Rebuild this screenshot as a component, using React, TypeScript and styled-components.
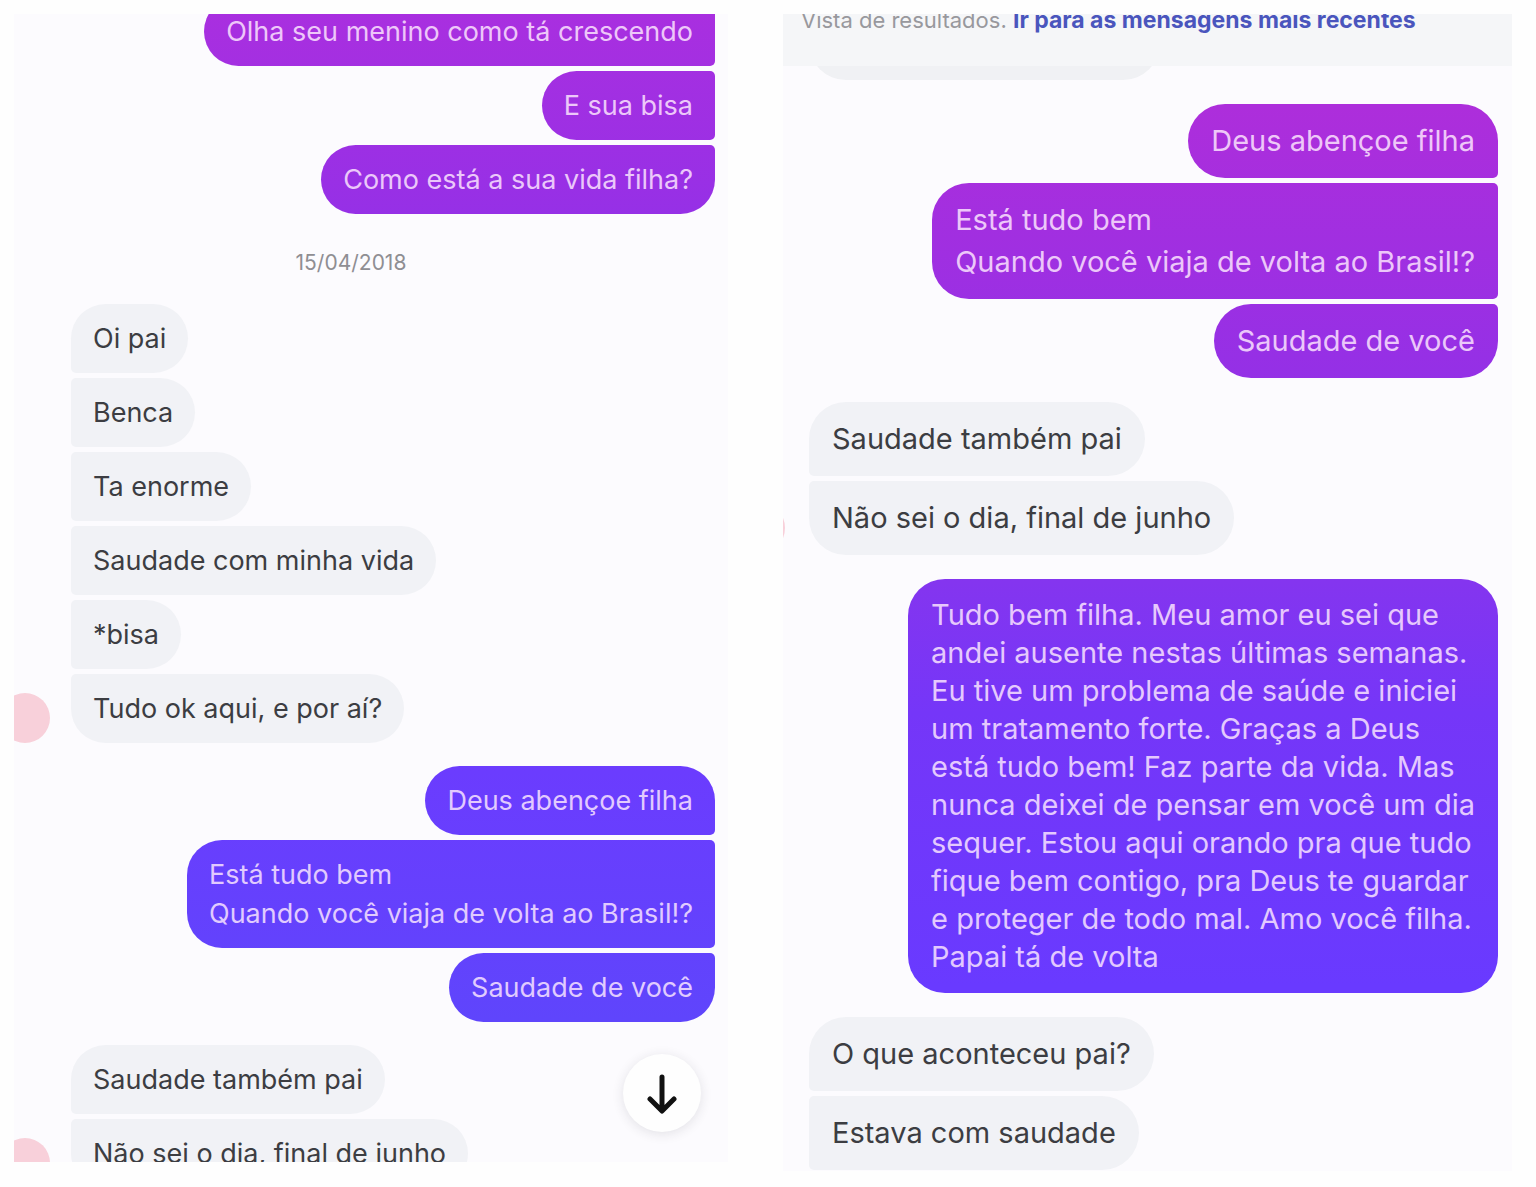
import React from "react";
import styled, { createGlobalStyle, css } from "styled-components";

const GlobalStyle = createGlobalStyle`
  *, *::before, *::after { box-sizing: border-box; }
  body {
    margin: 0;
    background: #fefefe;
    font-family: Inter, "Liberation Sans", sans-serif;
  }
`;

type Scale = "regular" | "large";

const scales = {
  regular: { font: 27, line: 39, padY: 15, padX: 22, radius: 35, edge: 13, avatar: 50, avatarShift: -14, avatarGap: 21, groupGap: 23 },
  large: { font: 29, line: 42, padY: 16, padX: 23, radius: 37, edge: 14, avatar: 54, avatarShift: -52, avatarGap: 24, groupGap: 24 },
};

const gradients = {
  regular: "linear-gradient(#aa2fdf 0%, #9630e6 18%, #6b3cfe 65%, #5f45fc 86%)",
  large: "linear-gradient(#ad2edb 9%, #9430e6 32%, #8435ef 49%, #7536f8 60%, #693aff 83%)",
};

const Page = styled.main`
  display: grid;
  grid-template-columns: 714fr 729fr;
  grid-template-rows: minmax(0, 1fr);
  column-gap: 55px;
  height: 100vh;
  padding: 14px 24px 16px 14px;
`;

const Panel = styled.section<{ $scale: Scale }>`
  position: relative;
  display: flex;
  flex-direction: column;
  overflow: hidden;
  margin-bottom: ${(p) => (p.$scale === "regular" ? 9 : 0)}px;
  background: #fcfbfe;
  font-size: ${(p) => scales[p.$scale].font}px;
  line-height: ${(p) => scales[p.$scale].line}px;
`;

const Thread = styled.div<{ $scale: Scale; $scrolled: number }>`
  display: flex;
  flex-direction: column;
  gap: ${(p) => scales[p.$scale].groupGap}px;
  margin-top: -${(p) => p.$scrolled}px;
  padding-right: ${(p) => scales[p.$scale].edge}px;
`;

const Row = styled.div<{ $scale: Scale }>`
  display: flex;
  align-items: flex-end;
  gap: ${(p) => scales[p.$scale].avatarGap}px;
`;

const Avatar = styled.span<{ $scale: Scale; $visible: boolean }>`
  flex: none;
  width: ${(p) => scales[p.$scale].avatar}px;
  height: ${(p) => scales[p.$scale].avatar}px;
  margin-left: ${(p) => scales[p.$scale].avatarShift}px;
  border-radius: 50%;
  background: #f8d0da;
  visibility: ${(p) => (p.$visible ? "visible" : "hidden")};
`;

const Stack = styled.div<{ $sent: boolean }>`
  display: flex;
  flex-direction: column;
  flex: 1;
  align-items: ${(p) => (p.$sent ? "flex-end" : "flex-start")};
  gap: 5px;
`;

const Bubble = styled.p<{ $scale: Scale; $sent: boolean; $top: boolean; $bottom: boolean; $long?: boolean }>`
  ${({ $scale, $sent, $top, $bottom }) => {
    const s = scales[$scale];
    const top = $top ? s.radius : 5;
    const bottom = $bottom ? s.radius : 5;
    return css`
      padding: ${s.padY}px ${s.padX}px;
      border-radius: ${$sent
        ? `${s.radius}px ${top}px ${bottom}px ${s.radius}px`
        : `${top}px ${s.radius}px ${s.radius}px ${bottom}px`};
      background: ${$sent ? `${gradients[$scale]} fixed` : "#f1f2f6"};
      color: ${$sent ? "rgba(255, 235, 255, 0.82)" : "#3c3d42"};
    `;
  }}
  margin: 0;
  white-space: pre-line;
  ${(p) => p.$long && css`
    padding-top: 17px;
    padding-bottom: 17px;
    line-height: 38px;
  `}
`;

const HiddenMessage = styled.div`
  width: 351px;
  height: 74px;
  border-radius: 37px;
  background: #f0f1f4;
`;

const DateLabel = styled.time`
  margin: 14px 0 6px;
  padding-right: 27px;
  color: #8f8e93;
  font-size: 21px;
  line-height: 24px;
  text-align: center;
`;

const ResultsBar = styled.header`
  position: relative;
  z-index: 1;
  flex: none;
  height: 52px;
  padding: 0 18px;
  background: #f5f6f8;
  color: #98989d;
  font-size: 22px;
  line-height: 24px;
`;

const ResultsText = styled.p`
  margin: -6px 0 0;
  white-space: nowrap;
`;

const RecentLink = styled.a`
  color: #4a55bd;
  font-size: 23px;
  font-weight: 700;
  text-decoration: none;
`;

const ScrollButton = styled.button`
  position: absolute;
  right: 27px;
  bottom: 30px;
  display: grid;
  place-items: center;
  width: 78px;
  height: 78px;
  padding: 0;
  border: 0;
  border-radius: 50%;
  background: #fefefe;
  box-shadow: 0 2px 12px rgba(40, 40, 60, 0.12);
  color: #111;
  cursor: pointer;
`;

interface GroupProps {
  scale: Scale;
  messages: string[];
  sent?: boolean;
  avatar?: boolean;
  continuesAbove?: boolean;
  continuesBelow?: boolean;
}

function Group({ scale, messages, sent = false, avatar = false, continuesAbove = false, continuesBelow = false }: GroupProps) {
  return (
    <Row $scale={scale}>
      {!sent && <Avatar $scale={scale} $visible={avatar} />}
      <Stack $sent={sent}>
        {messages.map((text, i) => (
          <Bubble
            key={text}
            $scale={scale}
            $sent={sent}
            $top={i === 0 && !continuesAbove}
            $bottom={i === messages.length - 1 && !continuesBelow}
            $long={text.length > 100}
          >
            {text}
          </Bubble>
        ))}
      </Stack>
    </Row>
  );
}

const blessing = ["Deus abençoe filha", "Está tudo bem\nQuando você viaja de volta ao Brasil!?", "Saudade de você"];
const reply = ["Saudade também pai", "Não sei o dia, final de junho"];
const longMessage = [
  "Tudo bem filha. Meu amor eu sei que",
  "andei ausente nestas últimas semanas.",
  "Eu tive um problema de saúde e iniciei",
  "um tratamento forte. Graças a Deus",
  "está tudo bem! Faz parte da vida. Mas",
  "nunca deixei de pensar em você um dia",
  "sequer. Estou aqui orando pra que tudo",
  "fique bem contigo, pra Deus te guardar",
  "e proteger de todo mal. Amo você filha.",
  "Papai tá de volta",
].join("\n");

export default function App() {
  return (
    <>
      <GlobalStyle />
      <Page>
        <Panel $scale="regular">
          <Thread $scale="regular" $scrolled={17}>
            <Group
              scale="regular"
              sent
              continuesAbove
              messages={["Olha seu menino como tá crescendo", "E sua bisa", "Como está a sua vida filha?"]}
            />
            <DateLabel dateTime="2018-04-15">15/04/2018</DateLabel>
            <Group
              scale="regular"
              avatar
              messages={["Oi pai", "Benca", "Ta enorme", "Saudade com minha vida", "*bisa", "Tudo ok aqui, e por aí?"]}
            />
            <Group scale="regular" sent messages={blessing} />
            <Group scale="regular" avatar messages={reply} />
          </Thread>
          <ScrollButton type="button" aria-label="Ir para o fim">
            <svg width="32" height="42" viewBox="0 0 32 42" fill="none" stroke="currentColor" strokeWidth="5" strokeLinecap="round" strokeLinejoin="round" aria-hidden="true">
              <path d="M16 5v33M4 27l12 12 12-12" />
            </svg>
          </ScrollButton>
        </Panel>
        <Panel $scale="large">
          <ResultsBar>
            <ResultsText>
              Vista de resultados. <RecentLink href="#recentes">Ir para as mensagens mais recentes</RecentLink>
            </ResultsText>
          </ResultsBar>
          <Thread $scale="large" $scrolled={60}>
            <Row $scale="large">
              <Avatar $scale="large" $visible={false} />
              <HiddenMessage />
            </Row>
            <Group scale="large" sent messages={blessing} />
            <Group scale="large" avatar messages={reply} />
            <Group scale="large" sent messages={[longMessage]} />
            <Group scale="large" continuesBelow messages={["O que aconteceu pai?", "Estava com saudade"]} />
          </Thread>
        </Panel>
      </Page>
    </>
  );
}
